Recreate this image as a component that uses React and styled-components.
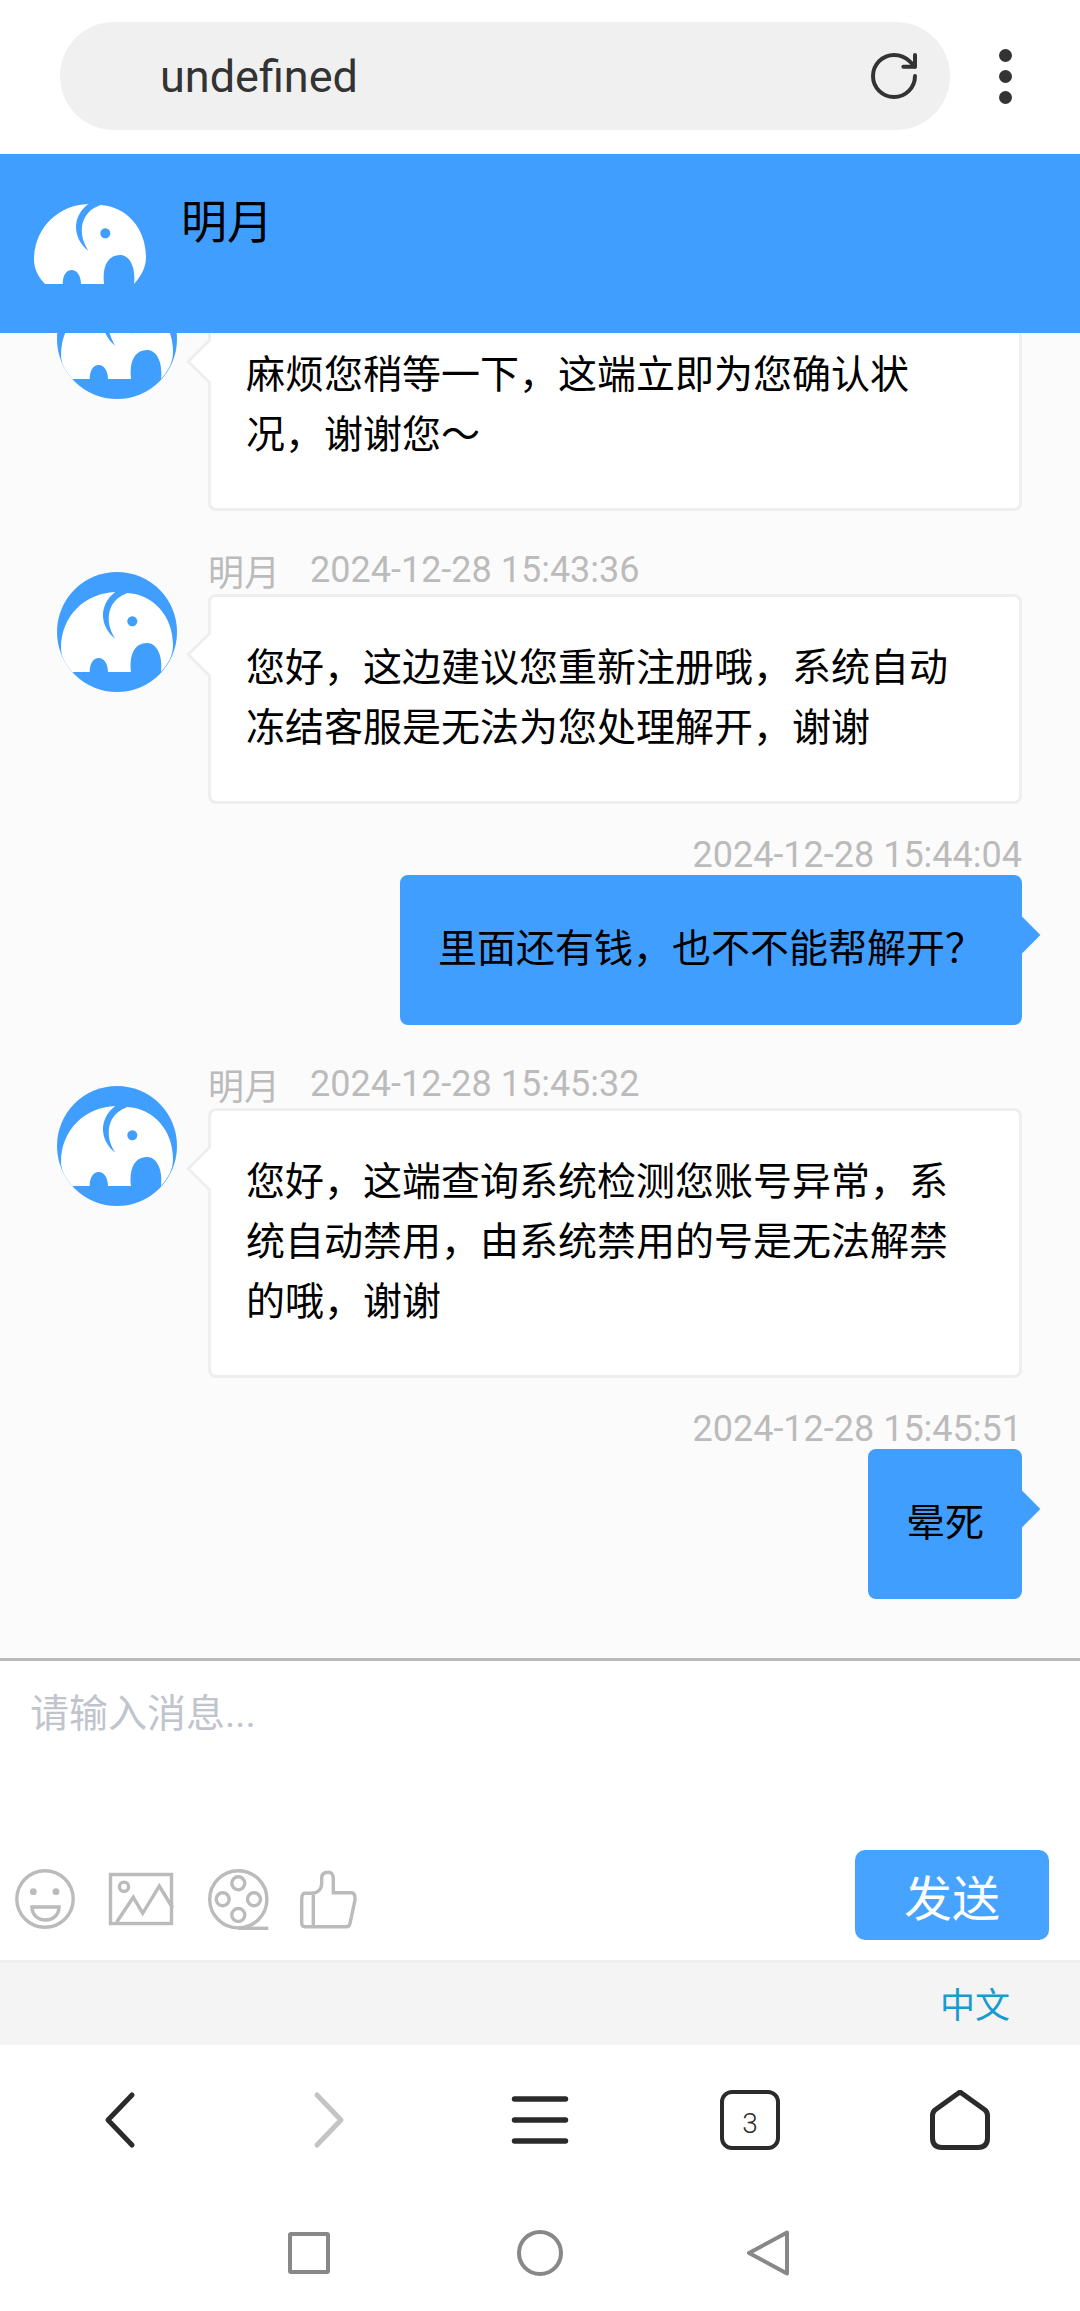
import React from "react";
import styled, { createGlobalStyle } from "styled-components";
import { RotateCw } from "lucide-react";

const messages = [
  { id: 1, name: "明月", time: "2024-12-28 15:43:10", text: "麻烦您稍等一下，这端立即为您确认状况，谢谢您～" },
  { id: 2, name: "明月", time: "2024-12-28 15:43:36", text: "您好，这边建议您重新注册哦，系统自动冻结客服是无法为您处理解开，谢谢" },
  { id: 3, mine: true, time: "2024-12-28 15:44:04", text: "里面还有钱，也不不能帮解开？" },
  { id: 4, name: "明月", time: "2024-12-28 15:45:32", text: "您好，这端查询系统检测您账号异常，系统自动禁用，由系统禁用的号是无法解禁的哦，谢谢" },
  { id: 5, mine: true, time: "2024-12-28 15:45:51", text: "晕死" },
];

function Elephant() {
  return (
    <ElephantSvg viewBox="0 0 112 80">
      <path
        fillRule="evenodd"
        d="M54.3 0C24 1 0 24 0 56C0 65 5 74 11 80H28.7C28.7 72 32 66 37.7 66C43 66 47 72 47 80H70C68 62 74 51 86 51C96 51 102 64 100 80C107 72 112 64 112 53C112 24 92 2 66 1L64.3 2C48 8 42 28 54.3 46.7C40 36 36 14 54.3 0ZM71.3 24.3a5 5 0 1 0 0.01 0Z"
      />
    </ElephantSvg>
  );
}

function Message({ name, time, text, mine }) {
  if (mine) {
    return (
      <MineRow>
        <MineTime>{time}</MineTime>
        <MineBubble>{text}</MineBubble>
      </MineRow>
    );
  }
  return (
    <TheirRow>
      <Avatar>
        <Elephant />
      </Avatar>
      <TheirBody>
        <Meta>
          <span>{name}</span>
          <span>{time}</span>
        </Meta>
        <TheirBubble>{text}</TheirBubble>
      </TheirBody>
    </TheirRow>
  );
}

export default function App() {
  return (
    <Page>
      <GlobalStyle />
      <AddressBar>
        <UrlPill>
          <UrlText>undefined</UrlText>
          <RotateCw size={56} strokeWidth={1.7} color="#333" />
        </UrlPill>
        <MoreDots>
          <i />
          <i />
          <i />
        </MoreDots>
      </AddressBar>

      <ChatHeader>
        <HeaderLogo>
          <Elephant />
        </HeaderLogo>
        <HeaderName>明月</HeaderName>
      </ChatHeader>

      <MessageList>
        {messages.map((m) => (
          <Message key={m.id} {...m} />
        ))}
      </MessageList>

      <Composer>
        <MessageInput placeholder="请输入消息..." />
        <ComposerBar>
          <Tools>
            <ToolIcon viewBox="0 0 66 60">
              <circle cx="30" cy="30" r="28.2" />
              <circle className="solid" cx="18.3" cy="22.7" r="3.4" />
              <circle className="solid" cx="41" cy="22.7" r="3.4" />
              <path d="M17 38H44C44 46 38 51 30.5 51C23 51 17 46 17 38Z" />
            </ToolIcon>
            <ToolIcon viewBox="0 0 66 60">
              <rect x="2.5" y="5.5" width="61" height="49" />
              <circle cx="16" cy="17.7" r="4.6" />
              <path d="M8.7 53L25.3 28.3L34.7 44.3L51.3 17L64.7 39" />
            </ToolIcon>
            <ToolIcon viewBox="0 0 66 60">
              <circle cx="37.3" cy="30.3" r="28.6" />
              <circle cx="37.3" cy="14.3" r="6.5" />
              <circle cx="37.3" cy="46" r="6.5" />
              <circle cx="21.7" cy="30.3" r="6.5" />
              <circle cx="53" cy="30.3" r="6.5" />
              <path d="M37.3 59.3H67.3" />
            </ToolIcon>
            <ToolIcon viewBox="0 0 66 60">
              <path d="M7.7 31V54.3Q7.7 57.7 11 57.7H52.7Q55.5 57.7 56 54.3L61 31Q61.5 24 57.7 23.7H39.3V9.3C39.3 5 37 3.3 34.3 3.3C30 3.3 27.7 5 27.7 9V14.3C27.7 20 24 24.3 17.7 24.3H11Q7.7 24.3 7.7 31Z" />
              <path d="M19.3 26V57" />
            </ToolIcon>
          </Tools>
          <SendButton>发送</SendButton>
        </ComposerBar>
      </Composer>

      <LanguageBar>
        <LanguageLink>中文</LanguageLink>
      </LanguageBar>

      <BrowserNav>
        <NavSlot>
          <NavIcon viewBox="0 0 60 60">
            <path d="M42 5L18 30L42 55" />
          </NavIcon>
        </NavSlot>
        <NavSlot>
          <NavIcon $muted viewBox="0 0 60 60">
            <path d="M17 5L41 30L17 55" />
          </NavIcon>
        </NavSlot>
        <NavSlot>
          <NavIcon viewBox="0 0 60 60">
            <path strokeWidth="5.5" d="M4.5 9H55.5M4.5 30H55.5M4.5 51H55.5" />
          </NavIcon>
        </NavSlot>
        <NavSlot>
          <TabCount>3</TabCount>
        </NavSlot>
        <NavSlot>
          <NavIcon viewBox="0 0 60 60">
            <path d="M30 2L55 20Q57.5 22 57.5 26V48Q57.5 57.5 48 57.5H12Q2.5 57.5 2.5 48V26Q2.5 22 5 20Z" />
          </NavIcon>
        </NavSlot>
      </BrowserNav>

      <SystemNav>
        <SystemIcon viewBox="0 0 46 46">
          <rect x="2" y="4" width="38" height="38" rx="1" />
        </SystemIcon>
        <SystemIcon viewBox="0 0 46 46">
          <circle cx="23" cy="23" r="21" />
        </SystemIcon>
        <SystemIcon viewBox="0 0 46 46">
          <path d="M41 2.5V43.5L3 23Z" />
        </SystemIcon>
      </SystemNav>
    </Page>
  );
}

const GlobalStyle = createGlobalStyle`
  html, body {
    margin: 0;
    padding: 0;
    background: #fff;
  }
  * {
    box-sizing: border-box;
  }
`;

const Page = styled.div`
  width: 1080px;
  height: 2311px;
  display: flex;
  flex-direction: column;
  overflow: hidden;
  font-family: Roboto, "Noto Sans CJK SC", sans-serif;
`;

const AddressBar = styled.div`
  height: 154px;
  flex-shrink: 0;
  display: flex;
  align-items: flex-start;
  padding: 22px 0 0 60px;
  background: #fff;
`;

const UrlPill = styled.div`
  width: 890px;
  height: 108px;
  border-radius: 54px;
  background: #f0f0f0;
  display: flex;
  align-items: center;
  justify-content: space-between;
  padding: 0 28px 0 100px;
`;

const UrlText = styled.div`
  font-size: 45px;
  color: #333;
`;

const MoreDots = styled.div`
  display: flex;
  flex-direction: column;
  gap: 8px;
  margin: 27px 0 0 49px;

  i {
    display: block;
    width: 13px;
    height: 13px;
    border-radius: 50%;
    background: #333;
  }
`;

const ChatHeader = styled.div`
  height: 179px;
  flex-shrink: 0;
  display: flex;
  align-items: flex-start;
  background: #409eff;
  color: #fff;
`;

const ElephantSvg = styled.svg`
  display: block;
  width: 112px;
  height: 80px;
  fill: #fff;
`;

const HeaderLogo = styled.div`
  margin: 50px 0 0 34px;
`;

const HeaderName = styled.div`
  margin: 36px 0 0 35px;
  font-size: 46px;
  line-height: 64px;
  color: #000;
`;

const MessageList = styled.div`
  flex: 1;
  min-height: 0;
  overflow: hidden;
  display: flex;
  flex-direction: column;
  justify-content: flex-end;
  padding: 0 58px 59px 57px;
  background: #fbfbfb;
`;

const TheirRow = styled.div`
  flex-shrink: 0;
  display: flex;
  gap: 31px;
  margin-top: 37px;
`;

const Avatar = styled.div`
  width: 120px;
  height: 120px;
  flex-shrink: 0;
  margin-top: 24px;
  border-radius: 50%;
  overflow: hidden;
  background: #409eff;
  padding: 20px 4px 0;
`;

const TheirBody = styled.div`
  flex: 1;
  min-width: 0;
`;

const Meta = styled.div`
  height: 44px;
  margin-bottom: 2px;
  display: flex;
  align-items: center;
  gap: 30px;
  font-size: 36px;
  color: #bbb;
`;

const Bubble = styled.div`
  position: relative;
  padding: 41px 35px 43px;
  font-size: 39px;
  line-height: 60px;
  color: #000;
  border-radius: 8px;
  border: 3px solid #eee;
`;

const TheirBubble = styled(Bubble)`
  background: #fff;

  &::before {
    content: "";
    position: absolute;
    left: -18px;
    top: 41px;
    width: 30px;
    height: 30px;
    transform: rotate(45deg);
    background: #fff;
    border-left: 3px solid #eee;
    border-bottom: 3px solid #eee;
  }
`;

const MineRow = styled.div`
  flex-shrink: 0;
  display: flex;
  flex-direction: column;
  align-items: flex-end;
  margin-top: 33px;
`;

const MineTime = styled.div`
  height: 36px;
  margin-bottom: 2px;
  line-height: 36px;
  font-size: 36px;
  color: #bbb;
`;

const MineBubble = styled(Bubble)`
  background: #409eff;
  border-color: #409eff;

  &::after {
    content: "";
    position: absolute;
    right: -16px;
    top: 44px;
    width: 26px;
    height: 26px;
    transform: rotate(45deg);
    background: #409eff;
  }
`;

const Composer = styled.div`
  height: 302px;
  flex-shrink: 0;
  display: flex;
  flex-direction: column;
  background: #fff;
  border-top: 3px solid #b9b9b9;
`;

const MessageInput = styled.textarea`
  flex: 1;
  min-height: 0;
  width: 100%;
  padding: 23px 30px 0;
  border: 0;
  outline: 0;
  resize: none;
  background: transparent;
  font-family: inherit;
  font-size: 39px;
  line-height: 60px;

  &::placeholder {
    color: #c0c4cc;
    opacity: 1;
  }
`;

const ComposerBar = styled.div`
  display: flex;
  align-items: flex-end;
  justify-content: space-between;
  padding: 0 31px 20px 15px;
`;

const Tools = styled.div`
  display: flex;
  gap: 27px;
  margin-bottom: 11px;
`;

const ToolIcon = styled.svg`
  display: block;
  width: 66px;
  height: 60px;
  overflow: visible;
  fill: none;
  stroke: #bbb;
  stroke-width: 3.4;

  .solid {
    fill: #bbb;
    stroke: none;
  }
`;

const SendButton = styled.button`
  width: 194px;
  height: 90px;
  border: 0;
  border-radius: 10px;
  background: #46a3ff;
  color: #fff;
  font-family: inherit;
  font-size: 48px;
`;

const LanguageBar = styled.div`
  height: 85px;
  flex-shrink: 0;
  display: flex;
  align-items: center;
  justify-content: flex-end;
  padding: 0 70px 4px 0;
  background: #f4f4f4;
  border-top: 3px solid #eee;
`;

const LanguageLink = styled.span`
  font-size: 35px;
  color: #1b9ad0;
`;

const BrowserNav = styled.div`
  height: 150px;
  flex-shrink: 0;
  display: grid;
  grid-template-columns: repeat(5, 210px);
  padding: 0 15px;
  background: #fff;
`;

const NavSlot = styled.div`
  display: flex;
  align-items: center;
  justify-content: center;
`;

const NavIcon = styled.svg`
  display: block;
  width: 60px;
  height: 60px;
  fill: none;
  stroke: ${(props) => (props.$muted ? "#c4c4c4" : "#2b2b2b")};
  stroke-width: 5;
  stroke-linecap: round;
  stroke-linejoin: round;
`;

const TabCount = styled.div`
  width: 60px;
  height: 60px;
  display: flex;
  align-items: center;
  justify-content: center;
  padding-top: 6px;
  border: 4.5px solid #2b2b2b;
  border-radius: 12px;
  font-size: 28px;
  font-weight: 300;
  color: #2b2b2b;
`;

const SystemNav = styled.div`
  height: 116px;
  flex-shrink: 0;
  display: flex;
  justify-content: center;
  gap: 183px;
  padding-top: 35px;
  background: #fff;
`;

const SystemIcon = styled.svg`
  display: block;
  width: 46px;
  height: 46px;
  fill: none;
  stroke: #888;
  stroke-width: 4;
  stroke-linejoin: round;
`;
